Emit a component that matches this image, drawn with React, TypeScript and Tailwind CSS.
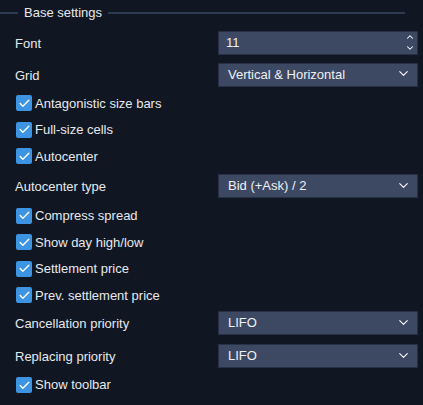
import { ChevronDown, ChevronUp, Check } from 'lucide-react';

const font = { fontFamily: '"Liberation Sans", Arial, sans-serif' };

function Checkbox({ label, h = 'h-[26.5px]' }: { label: string; h?: string }) {
  return (
    <label className={`flex items-center gap-[3px] pl-[1px] ${h}`}>
      <span className="w-4 h-4 rounded-[2px] bg-[#3d94e2] flex items-center justify-center">
        <Check size={13} strokeWidth={2.5} className="text-white" />
      </span>
      <span className="text-[13px] text-[#e6e9ee]">{label}</span>
    </label>
  );
}

function Row({ label, children, h }: { label: string; children: React.ReactNode; h: string }) {
  return (
    <div className={`flex items-center justify-between ${h}`}>
      <span className="text-[13px] text-[#e6e9ee] pt-[2px]">{label}</span>
      {children}
    </div>
  );
}

function Select({ value }: { value: string }) {
  return (
    <div className="w-[200px] h-6 bg-[#3d4863] border border-[#283046] flex items-center justify-between pl-[9px] pr-[6px]">
      <span className="text-[13px] text-[#eef0f4]">{value}</span>
      <ChevronDown size={15} strokeWidth={1.75} className="text-white -mt-[2px]" />
    </div>
  );
}

export default function App() {
  return (
    <div className="w-[423px] h-[405px] bg-[#111722] overflow-hidden" style={font}>
      <div className="flex items-center h-[26px]">
        <div className="w-[18px] h-[2px] bg-[#2e3a50]" />
        <span className="px-[6px] text-[13px] text-[#e6e9ee]">Base settings</span>
        <div className="w-[297px] h-[2px] bg-[#2e3a50]" />
      </div>
      <div className="pl-[15px] pr-[5px]">
        <Row label="Font" h="h-[33px]">
          <div className="w-[200px] h-6 bg-[#3d4863] border border-[#283046] flex items-center justify-between pl-[7px] pr-[2px]">
            <span className="text-[13px] text-[#eef0f4]">11</span>
            <div className="flex flex-col items-center gap-[1px]">
              <ChevronUp size={10} strokeWidth={2.5} className="text-white" />
              <ChevronDown size={10} strokeWidth={2.5} className="text-white" />
            </div>
          </div>
        </Row>
        <Row label="Grid" h="h-[31px]">
          <Select value="Vertical & Horizontal" />
        </Row>
        <Checkbox label="Antagonistic size bars" />
        <Checkbox label="Full-size cells" />
        <Checkbox label="Autocenter" />
        <Row label="Autocenter type" h="h-[33px]">
          <Select value="Bid (+Ask) / 2" />
        </Row>
        <Checkbox label="Compress spread" />
        <Checkbox label="Show day high/low" />
        <Checkbox label="Settlement price" />
        <Checkbox label="Prev. settlement price" />
        <Row label="Cancellation priority" h="h-[29px]">
          <Select value="LIFO" />
        </Row>
        <Row label="Replacing priority" h="h-[37px]">
          <Select value="LIFO" />
        </Row>
        <Checkbox label="Show toolbar" h="h-[21px]" />
      </div>
    </div>
  );
}
